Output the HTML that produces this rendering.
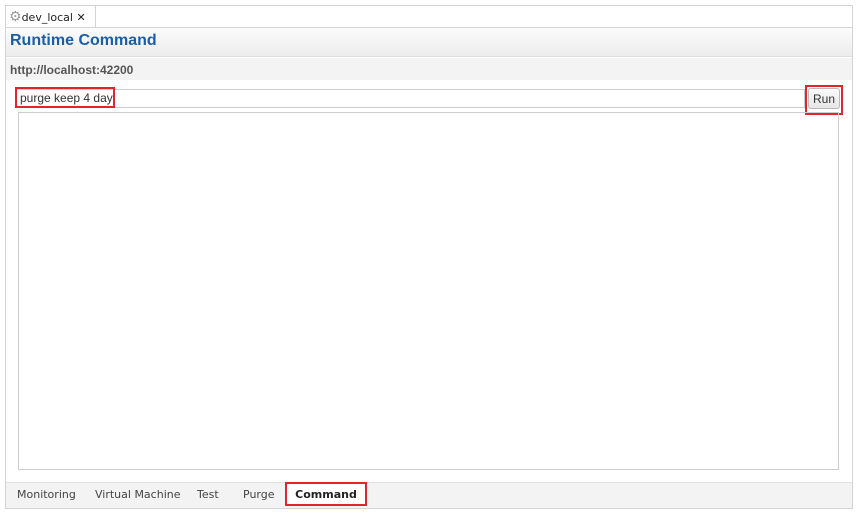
<!DOCTYPE html>
<html><head><style>
*{margin:0;padding:0;box-sizing:border-box}
body{width:857px;height:513px;background:#fff;position:relative;font-family:"Liberation Sans",sans-serif;overflow:hidden}
.a{position:absolute}
.t{position:absolute;top:488px;font-family:'DejaVu Sans',sans-serif;font-size:11px;color:#444}
</style></head><body>
<div class="a" style="left:5px;top:5px;width:848px;height:504px;border:1px solid #d4d4d4"></div>
<div class="a" style="left:6px;top:6px;width:90px;height:21px;border-right:1px solid #d4d4d4;background:#fff;font-family:'DejaVu Sans',sans-serif;font-size:11px;color:#222;padding:3px 0 0 3px">
<span style="color:#999;font-size:14px">⚙</span>dev_local <span style="font-size:11px">✕</span></div>
<div class="a" style="left:6px;top:27px;width:846px;height:30px;border-top:1px solid #d4d4d4;border-bottom:1px solid #ddd;background:linear-gradient(#fcfcfc,#ececec)"></div>
<div class="a" style="left:10px;top:32px;font-size:16px;font-weight:bold;color:#1b5ea8">Runtime Command</div>
<div class="a" style="left:6px;top:58px;width:846px;height:22px;background:#f3f3f3"></div>
<div class="a" style="left:10px;top:63px;font-size:12px;font-weight:bold;color:#555">http://localhost:42200</div>
<div class="a" style="left:16px;top:89px;width:789px;height:19px;border:1px solid #ccc;background:#fff"></div>
<div class="a" style="left:15px;top:87px;width:100px;height:21px;border:2px solid #e0262b"></div>
<div class="a" style="left:20px;top:91px;font-size:12px;color:#333">purge keep 4 day</div>
<div class="a" style="left:805px;top:85px;width:38px;height:30px;border:2px solid #e0262b"></div>
<div class="a" style="left:808px;top:88px;width:32px;height:21px;border:1px solid #bbb;border-radius:3px;background:linear-gradient(#fafafa,#e6e6e6);font-size:12px;color:#333;text-align:center;padding-top:3px">Run</div>
<div class="a" style="left:18px;top:112px;width:821px;height:358px;border:1px solid #ccc"></div>
<div class="a" style="left:6px;top:482px;width:846px;height:26px;background:#f3f3f3;border-top:1px solid #e0e0e0"></div>
<div class="t" style="left:17px">Monitoring</div>
<div class="t" style="left:95px">Virtual Machine</div>
<div class="t" style="left:197px">Test</div>
<div class="t" style="left:243px">Purge</div>
<div class="a" style="left:285px;top:482px;width:82px;height:24px;border:2px solid #e0262b;background:#fff;font-family:'DejaVu Sans',sans-serif;font-size:11px;font-weight:bold;color:#222;text-align:center;padding-top:4px">Command</div>
</body></html>
